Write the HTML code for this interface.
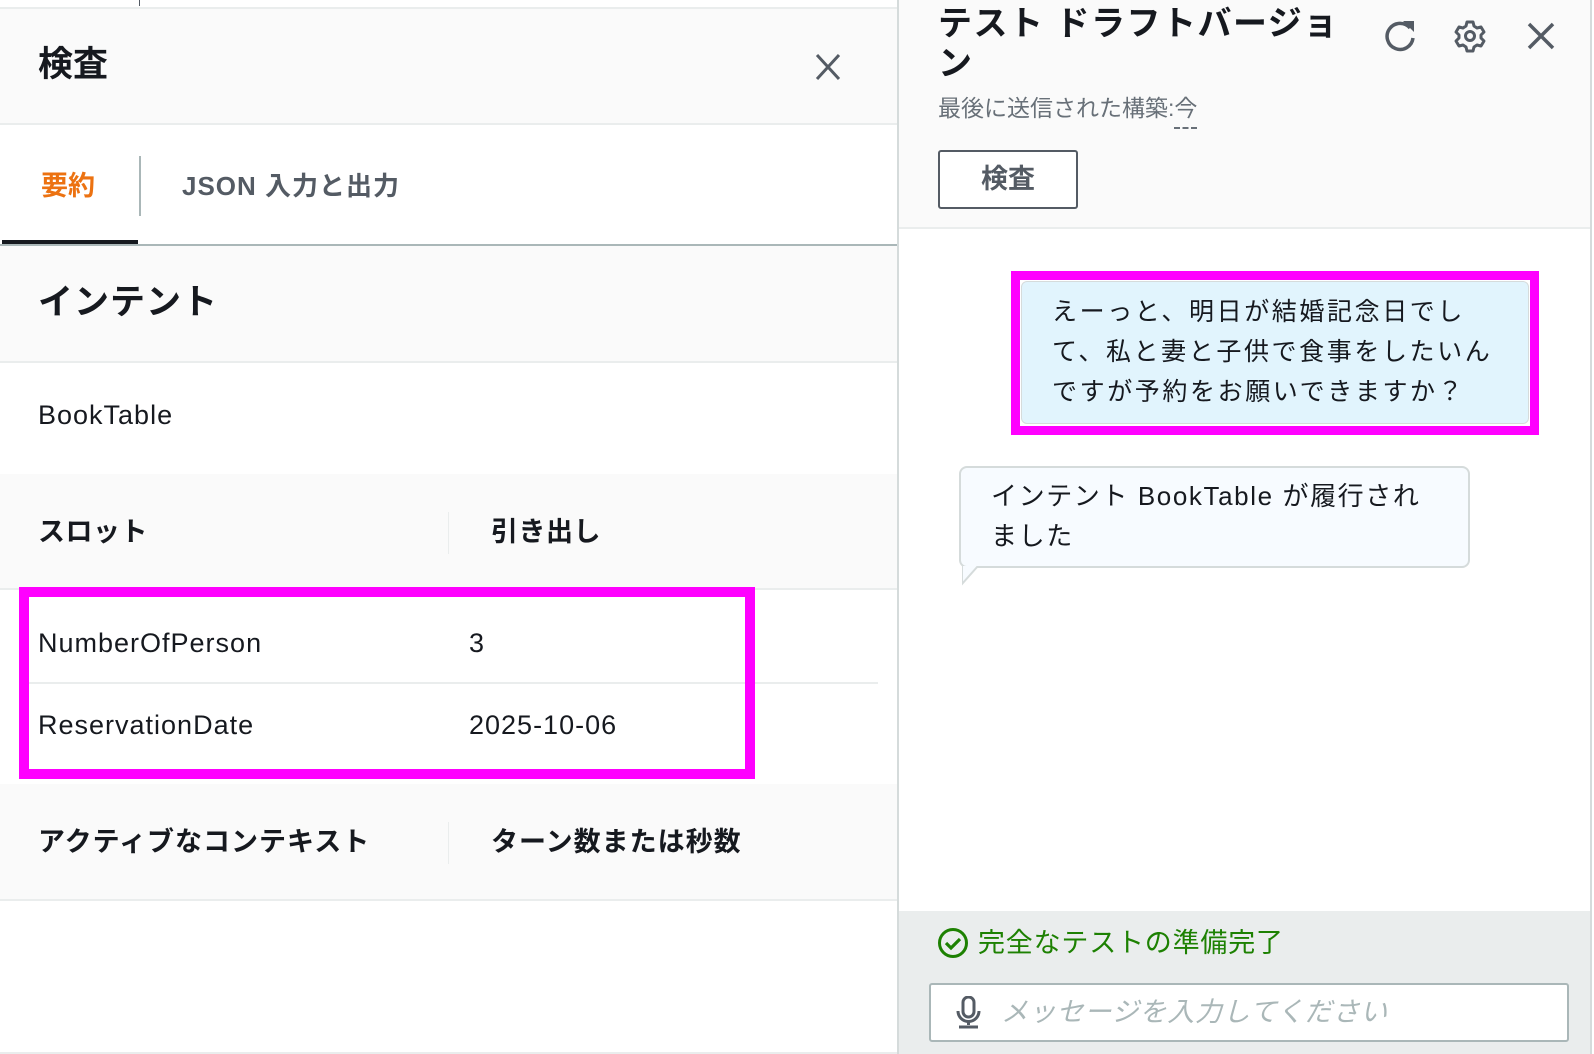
<!DOCTYPE html>
<html><head><meta charset="utf-8"><style>
*{margin:0;padding:0;box-sizing:border-box}
body{width:1594px;height:1054px;overflow:hidden;background:#fff;font-family:"Liberation Sans","Noto Sans CJK JP",sans-serif;color:#16191f;position:relative}
.a{position:absolute}
.b{font-weight:bold}
.l{letter-spacing:1px}
</style></head><body>
<div class="a" style="left:0;top:0;width:898px;height:7px;background:#fff"></div>
<div class="a" style="left:139px;top:0;width:1px;height:6px;background:#545b64"></div>
<div class="a" style="left:0;top:7px;width:898px;height:2px;background:#eaeded"></div>
<div class="a" style="left:0;top:9px;width:898px;height:116px;background:#fafafa;border-bottom:2px solid #eaeded"></div>
<div class="a b" style="left:38px;top:45px;font-size:35px;line-height:40px">検査</div>
<svg class="a" style="left:815px;top:53px" width="26" height="28" viewBox="0 0 26 28"><path d="M2 2L24 26M24 2L2 26" stroke="#545b64" stroke-width="3"/></svg>
<div class="a b" style="left:41px;top:170px;font-size:27px;line-height:32px;color:#ec7211">要約</div>
<div class="a" style="left:139px;top:156px;width:2px;height:60px;background:#aab7b8"></div>
<div class="a b" style="left:182px;top:170px;font-size:26px;line-height:32px;color:#545b64;letter-spacing:1px">JSON 入力と出力</div>
<div class="a" style="left:0;top:244px;width:898px;height:2px;background:#aab7b8"></div>
<div class="a" style="left:2px;top:240px;width:136px;height:4px;background:#16191f"></div>
<div class="a" style="left:0;top:246px;width:898px;height:117px;background:#fafafa;border-bottom:2px solid #eaeded"></div>
<div class="a b" style="left:38px;top:283px;font-size:35px;line-height:40px;letter-spacing:1px">インテント</div>
<div class="a l" style="left:38px;top:399px;font-size:27px;line-height:32px">BookTable</div>
<div class="a" style="left:0;top:474px;width:898px;height:116px;background:#fafafa;border-bottom:2px solid #eaeded"></div>
<div class="a b" style="left:38px;top:516px;font-size:27px;line-height:32px;letter-spacing:0.5px">スロット</div>
<div class="a" style="left:448px;top:512px;width:1px;height:42px;background:#eaeded"></div>
<div class="a b" style="left:491px;top:516px;font-size:27px;line-height:32px;letter-spacing:0.5px">引き出し</div>
<div class="a l" style="left:38px;top:627px;font-size:27px;line-height:32px">NumberOfPerson</div>
<div class="a l" style="left:469px;top:627px;font-size:27px;line-height:32px">3</div>
<div class="a" style="left:28px;top:682px;width:850px;height:2px;background:#eaeded"></div>
<div class="a l" style="left:38px;top:709px;font-size:27px;line-height:32px">ReservationDate</div>
<div class="a l" style="left:469px;top:709px;font-size:27px;line-height:32px">2025-10-06</div>
<div class="a" style="left:19px;top:587px;width:736px;height:192px;border:10px solid #ff00ff"></div>
<div class="a" style="left:0;top:784px;width:898px;height:117px;background:#fafafa;border-bottom:2px solid #eaeded"></div>
<div class="a b" style="left:38px;top:826px;font-size:27px;line-height:32px;letter-spacing:1px">アクティブなコンテキスト</div>
<div class="a" style="left:448px;top:822px;width:1px;height:42px;background:#eaeded"></div>
<div class="a b" style="left:491px;top:826px;font-size:27px;line-height:32px;letter-spacing:1px">ターン数または秒数</div>
<div class="a" style="left:0;top:1052px;width:898px;height:2px;background:#eaeded"></div>
<div class="a" style="left:897px;top:0;width:2px;height:1054px;background:#d5dbdb"></div>
<div class="a" style="left:899px;top:0;width:691px;height:229px;background:#fafafa;border-bottom:2px solid #eaeded"></div>
<div class="a b" style="left:938px;top:4px;font-size:34px;line-height:40px;width:440px;letter-spacing:1.5px">テスト ドラフトバージョ<br>ン</div>
<svg class="a" style="left:1383px;top:19px" width="34" height="34" viewBox="0 0 34 34"><path d="M27 9A13 13 0 1 0 30 19" fill="none" stroke="#545b64" stroke-width="3.5"/><path d="M20 2H31V13Z" fill="#545b64"/></svg>
<svg class="a" style="left:1453px;top:19px" width="34" height="34" viewBox="0 0 34 34"><path d="M14 3h6l1 4 3 2 4-1 3 5-3 3v3l3 3-3 5-4-1-3 2-1 4h-6l-1-4-3-2-4 1-3-5 3-3v-3l-3-3 3-5 4 1 3-2z" fill="none" stroke="#545b64" stroke-width="3" stroke-linejoin="round"/><circle cx="17" cy="17" r="4.5" fill="none" stroke="#545b64" stroke-width="3"/></svg>
<svg class="a" style="left:1527px;top:22px" width="28" height="28" viewBox="0 0 28 28"><path d="M2 2L26 26M26 2L2 26" stroke="#545b64" stroke-width="3.5"/></svg>
<div class="a" style="left:938px;top:94px;font-size:23px;line-height:28px;color:#687078">最後に送信された構築:<span style="border-bottom:2px dashed #687078;padding-bottom:6px">今</span></div>
<div class="a b" style="left:938px;top:150px;width:140px;height:59px;border:2px solid #545b64;border-radius:3px;background:#fff;font-size:27px;line-height:55px;text-align:center;color:#545b64">検査</div>
<div class="a" style="left:1021px;top:281px;width:508px;height:143px;background:#e1f4fd;border:1px solid #d5dbdb;border-radius:6px"></div>
<div class="a" style="left:1052px;top:292px;font-size:25px;line-height:40px;width:480px;letter-spacing:2.6px">えーっと、明日が結婚記念日でし<br>て、私と妻と子供で食事をしたいん<br>ですが予約をお願いできますか？</div>
<div class="a" style="left:1011px;top:271px;width:528px;height:164px;border:9px solid #ff00ff"></div>
<div class="a" style="left:959px;top:466px;width:511px;height:102px;background:#f7fbff;border:2px solid #d5dbdb;border-radius:8px"></div>
<svg class="a" style="left:962px;top:566px" width="20" height="20" viewBox="0 0 20 20"><path d="M0 0V18L16 0" fill="#f7fbff" stroke="#d5dbdb" stroke-width="2"/></svg>
<div class="a" style="left:991px;top:476px;font-size:26px;line-height:40px;letter-spacing:1.6px">インテント BookTable が履行され<br>ました</div>
<div class="a" style="left:899px;top:911px;width:691px;height:143px;background:#eaeded"></div>
<svg class="a" style="left:937px;top:927px" width="32" height="32" viewBox="0 0 32 32"><circle cx="16" cy="16" r="13.5" fill="none" stroke="#1d8102" stroke-width="3"/><path d="M9 16l5 5 9-9" fill="none" stroke="#1d8102" stroke-width="3.2"/></svg>
<div class="a" style="left:978px;top:927px;font-size:27px;line-height:32px;color:#1d8102;letter-spacing:0.8px">完全なテストの準備完了</div>
<div class="a" style="left:929px;top:983px;width:640px;height:59px;background:#fff;border:2px solid #aab7b8;border-radius:3px"></div>
<svg class="a" style="left:955px;top:996px" width="28" height="34" viewBox="0 0 28 34"><rect x="8" y="1" width="11" height="20" rx="5.5" fill="none" stroke="#545b64" stroke-width="3"/><path d="M3 15a10.5 10.5 0 0 0 21 0M13.5 25v4M4 31h19" fill="none" stroke="#545b64" stroke-width="3"/></svg>
<div class="a" style="left:1001px;top:996px;font-size:27px;line-height:32px;color:#aab7b8;font-style:italic;letter-spacing:0.8px">メッセージを入力してください</div>
<div class="a" style="left:1590px;top:0;width:4px;height:1054px;background:#fff;border-left:2px solid #d5dbdb"></div>
</body></html>
